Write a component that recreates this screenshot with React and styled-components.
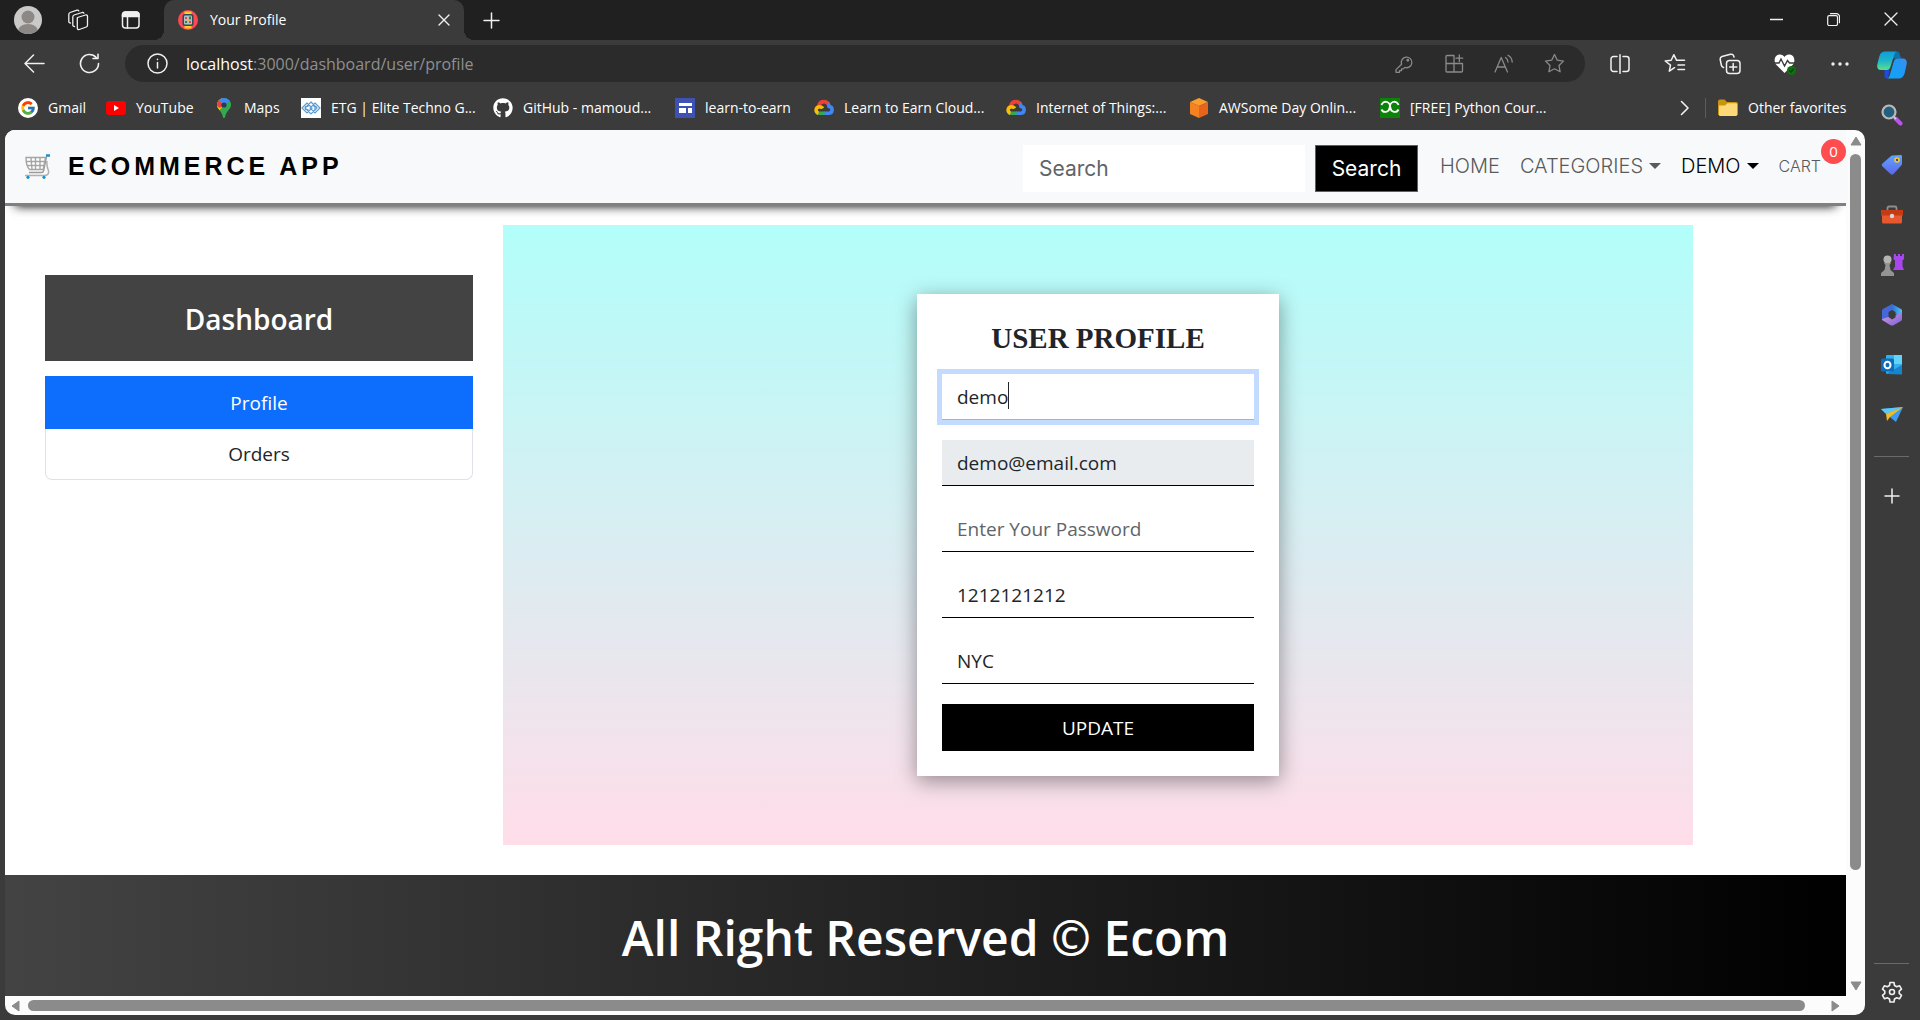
import React, { useEffect, useRef } from "react";
import styled, { createGlobalStyle, css } from "styled-components";
import { FcGoogle } from "react-icons/fc";
import { FaGithub } from "react-icons/fa";

const ui = `"Open Sans", "Noto Sans", sans-serif`;
const poppins = `Inter, "Open Sans", sans-serif`;
const chrome = "#3b3b3b";

const GlobalStyle = createGlobalStyle`
  *, *::before, *::after { box-sizing: border-box; }
  body { margin: 0; background: ${chrome}; font-family: ${ui}; overflow: hidden; }
  h1, h2, ul { margin: 0; padding: 0; }
  ul { list-style: none; }
  button, input { font: inherit; }
  svg { display: block; flex: none; }
`;

/* ---------- browser frame ---------- */

const Window = styled.div`
  display: flex;
  flex-direction: column;
  min-height: 100vh;
  background: ${chrome};
  color: #fff;
`;

const TitleBar = styled.header`
  display: flex;
  align-items: stretch;
  height: 40px;
  background: #202020;
`;

const IconButton = styled.button`
  display: flex;
  align-items: center;
  justify-content: center;
  flex: none;
  width: ${(p) => p.$w || 55}px;
  height: ${(p) => p.$h || 38}px;
  padding: 0;
  border: 0;
  background: none;
  color: ${(p) => (p.$dim ? "#8a8a8a" : "#f0f0f0")};
`;

const Tab = styled.div`
  position: relative;
  display: flex;
  align-items: center;
  width: 300px;
  margin-left: 3px;
  padding: 0 6px 0 14px;
  border-radius: 10px 10px 0 0;
  background: ${chrome};
  &::before,
  &::after {
    content: "";
    position: absolute;
    bottom: 0;
    width: 10px;
    height: 10px;
  }
  &::before {
    left: -10px;
    background: radial-gradient(circle at 0 0, transparent 10px, ${chrome} 10px);
  }
  &::after {
    right: -10px;
    background: radial-gradient(circle at 100% 0, transparent 10px, ${chrome} 10px);
  }
`;

const TabTitle = styled.span`
  flex: 1;
  margin-left: 12px;
  padding-bottom: 2px;
  font-size: 14px;
`;

const WindowControls = styled.div`
  display: flex;
  margin-left: auto;
`;

const Body = styled.div`
  display: flex;
  flex: 1;
`;

const Main = styled.div`
  display: flex;
  flex-direction: column;
  flex: 1;
  min-width: 0;
`;

const Toolbar = styled.div`
  display: flex;
  align-items: center;
  height: 47px;
  margin-right: -2px;
  padding-left: 7px;
`;

const AddressBar = styled.div`
  display: flex;
  align-items: center;
  flex: 1;
  height: 37px;
  margin: 0 7px 0 8px;
  padding: 0 6px 0 7px;
  border-radius: 19px;
  background: #2b2b2b;
`;

const Url = styled.div`
  flex: 1;
  margin-left: 4px;
  font-size: 16px;
  color: #8f8f8f;
  b {
    font-weight: 400;
    color: #fff;
  }
`;

const Bookmarks = styled.nav`
  display: flex;
  align-items: center;
  gap: 21px;
  height: 43px;
  padding: 0 18px 2px;
`;

const Bookmark = styled.a`
  display: flex;
  align-items: center;
  gap: 10px;
  flex: none;
  width: ${(p) => p.$w}px;
  color: #fff;
  font-size: 14px;
  line-height: 20px;
  white-space: nowrap;
  text-decoration: none;
`;

const BookmarkEnd = styled.div`
  display: flex;
  align-items: center;
  gap: 12px;
  margin-left: auto;
`;

const Separator = styled.span`
  width: 1px;
  height: 20px;
  background: #5c5c5c;
`;

const Sidebar = styled.aside`
  display: flex;
  flex-direction: column;
  align-items: center;
  width: 55px;
  padding: 0 2px 3px 0;
`;

const Rule = styled.hr`
  width: 35px;
  margin: ${(p) => (p.$bottom ? "auto 0 3px" : "16px 0 14px")};
  border: 0;
  border-top: 1px solid #6a6a6a;
`;

/* ---------- page viewport ---------- */

const Viewport = styled.div`
  display: grid;
  grid-template: 1fr 19px / minmax(0, 1fr) 19px;
  flex: 1;
  margin: 0 0 5px 5px;
  border-radius: 10px;
  overflow: hidden;
  background: #fcfcfc;
  color: #212529;
`;

const Page = styled.div`
  display: flex;
  flex-direction: column;
  background: #fff;
`;

const VScroll = styled.div`
  display: flex;
  flex-direction: column;
  align-items: center;
  gap: 8px;
  padding: 6px 4px 5px;
`;

const HScroll = styled.div`
  display: flex;
  align-items: center;
  gap: 8px;
  padding: 4px 6px;
`;

const Thumb = styled.div`
  flex: ${(p) => p.$size};
  align-self: stretch;
  border-radius: 6px;
  background: #8b8b8b;
`;

const Track = styled.div`
  flex: ${(p) => p.$size};
`;

/* ---------- shop page ---------- */

const NavBar = styled.header`
  position: relative;
  display: flex;
  align-items: flex-start;
  padding: 15px 0 11px 20px;
  border-bottom: 3px solid #808080;
  background: #f8f9fa;
  box-shadow: 0 10px 10px -10px #000;
`;

const Brand = styled.a`
  display: flex;
  align-items: center;
  gap: 18px;
  height: 42px;
  margin-right: auto;
  color: #000;
  font: 700 25px/42px "Liberation Sans", Arial, sans-serif;
  letter-spacing: 4px;
  text-decoration: none;
`;

const SearchForm = styled.form`
  display: flex;
  gap: 10px;
  margin-right: 22px;
  font-family: ${poppins};
  font-size: 21px;
`;

const SearchInput = styled.input`
  width: 282px;
  height: 47px;
  padding: 0 16px;
  border: 0;
  background: #fff;
  color: #212529;
  &::placeholder {
    color: #5f6469;
    opacity: 1;
  }
`;

const SearchButton = styled.button`
  width: 103px;
  height: 47px;
  padding: 0;
  border: 1px solid #198754;
  background: #000;
  color: #fff;
`;

const NavLinks = styled.ul`
  display: flex;
  gap: 20px;
  padding-right: 25px;
  font-family: ${poppins};
`;

const NavLink = styled.a`
  position: relative;
  display: flex;
  align-items: center;
  gap: 6px;
  height: 42px;
  color: ${(p) => (p.$active ? "#000" : "#595a5b")};
  font-size: ${(p) => (p.$small ? 16 : 20)}px;
  font-weight: 300;
  text-decoration: none;
`;

const Caret = styled.span`
  border: 6px solid transparent;
  border-top-color: currentColor;
  border-bottom: 0;
`;

const Badge = styled.span`
  position: absolute;
  top: -6px;
  right: -25px;
  width: 25px;
  height: 25px;
  border-radius: 50%;
  background: #ff4d4f;
  color: #fff;
  font: 400 15px/25px ${ui};
  text-align: center;
`;

const Content = styled.main`
  display: grid;
  grid-template-columns: minmax(0, 428fr) minmax(0, 1190fr);
  gap: 30px;
  flex: 1;
  padding: 19px 153px 30px 40px;
`;

const Menu = styled.nav`
  padding-top: 50px;
  text-align: center;
`;

const MenuTitle = styled.h1`
  margin-bottom: 15px;
  padding: 24px 0 22px;
  background: #434343;
  color: #fff;
  font-size: 28px;
  font-weight: 600;
  line-height: 40px;
`;

const MenuItem = styled.a`
  display: block;
  padding: 10px 0;
  border: 1px solid #dee2e6;
  border-top: 0;
  border-radius: 0 0 7px 7px;
  color: #212529;
  font-size: 19px;
  line-height: 30px;
  text-decoration: none;
  ${(p) =>
    p.$active &&
    css`
      padding: 12px 0 10px;
      border-color: #0d6efd;
      border-radius: 0;
      background: #0d6efd;
      color: #fff;
    `}
`;

const Panel = styled.section`
  display: flex;
  align-items: center;
  justify-content: center;
  min-height: 620px;
  background: linear-gradient(#b2fefa, #ffdde9);
`;

const Card = styled.form`
  display: flex;
  flex-direction: column;
  gap: 20px;
  width: 362px;
  padding: 25px;
  background: #fff;
  box-shadow: 0 5px 20px rgba(0, 0, 0, 0.4);
`;

const CardTitle = styled.h2`
  margin-bottom: -3px;
  font: 700 29px/38px "Liberation Serif", serif;
  text-align: center;
`;

const Field = styled.input`
  display: block;
  width: 100%;
  height: 46px;
  padding: 0 15px;
  border: 0;
  border-bottom: 1px solid #000;
  border-radius: 0;
  outline: 0;
  background: #fff;
  color: #212529;
  font-size: 19px;
  &::placeholder {
    color: #5f6469;
    opacity: 1;
  }
  &:disabled {
    background: #e9ecef;
  }
  &:focus {
    border-color: #86b7fe;
    box-shadow: 0 0 0 5px #c2dbfe;
    caret-color: transparent;
  }
`;

const FieldWrap = styled.div`
  position: relative;
`;

const TextCaret = styled.span`
  position: absolute;
  top: 8px;
  left: 66px;
  width: 1px;
  height: 27px;
  background: #212529;
`;

const UpdateButton = styled.button`
  height: 47px;
  padding: 0;
  border: 0;
  background: #000;
  color: #fff;
  font-size: 19px;
`;

const Footer = styled.footer`
  padding: 28px 0 23px;
  background: linear-gradient(to right, #434343, #000);
  color: #fff;
  font-size: 48px;
  font-weight: 600;
  line-height: 70px;
  text-align: center;
`;

/* ---------- icons ---------- */

const Line = ({ w = 20, h = w, sw = 1.5, children, ...rest }) => (
  <svg width={w} height={h} viewBox={`0 0 ${w} ${h}`} fill="none" stroke="currentColor" strokeWidth={sw} strokeLinecap="round" strokeLinejoin="round" aria-hidden="true" {...rest}>
    {children}
  </svg>
);

const Art = ({ w = 20, h = w, children }) => (
  <svg width={w} height={h} viewBox={`0 0 ${w} ${h}`} aria-hidden="true">
    {children}
  </svg>
);

const Avatar = () => (
  <Art w={28}>
    <clipPath id="avatarClip"><circle cx="14" cy="14" r="14" /></clipPath>
    <g clipPath="url(#avatarClip)">
      <rect width="28" height="28" fill="#cbc9c7" />
      <circle cx="14" cy="11" r="6.5" fill="#8c8886" />
      <ellipse cx="14" cy="25" rx="10" ry="7" fill="#8c8886" />
    </g>
  </Art>
);

const Workspaces = () => (
  <Line w={22} sw={1.3}>
    <path d="M10.5 8.5l8-2.5c1-.3 2 .2 2 1.3v9c0 .8-.4 1.400-1.200 1.700l-7 2.500c-1 .3-2-.2-2-1.300v-9c0-.8-.1-1.300.2-1.700z" />
    <path d="M7.500 17.500c-1 0-1.700-.6-1.700-1.600V8c0-1 .4-1.700 1.300-2l8-2.500c.8-.2 1.500 0 1.800.7" />
    <path d="M3.500 14c-1 0-1.700-.6-1.700-1.600V5.500c0-1 .4-1.700 1.300-2L10 1.200c.8-.2 1.500 0 1.800.7" />
  </Line>
);

const TabActions = () => (
  <Line w={20} sw={1.5}>
    <rect x="1.500" y="2" width="16.500" height="16" rx="3" />
    <path d="M1.500 6.500V5a3 3 0 013-3H15a3 3 0 013 3v1.500z" fill="currentColor" />
    <path d="M6.500 7v11" />
  </Line>
);

const Favicon = () => (
  <Art w={20}>
    <circle cx="10" cy="10" r="10" fill="#ff4850" />
    <rect x="6.500" y="1.500" width="7" height="17" fill="#ffcd1f" />
    <rect x="4.500" y="4" width="11" height="12" rx="2.500" fill="#2d4a5c" />
    <rect x="6" y="5.500" width="8" height="9" rx="1" fill="#a9c4c8" />
    <path d="M7 7h2v2H7zM11 11h2v2h-2z" fill="#e4474b" />
    <path d="M11 6.500h2v3h-2zM7 11h2v2H7z" fill="#3e7d4b" />
    <path d="M9 9h2.500v2H9z" fill="#f6b927" />
  </Art>
);

const Cross = ({ s = 13, sw = 1.4 }) => (
  <Line w={s} sw={sw}><path d={`M1 1L${s - 1} ${s - 1}M${s - 1} 1L1 ${s - 1}`} /></Line>
);
const Plus = ({ s = 17, sw = 1.5 }) => (
  <Line w={s} sw={sw}><path d={`M${s / 2} 1V${s - 1}M1 ${s / 2}H${s - 1}`} /></Line>
);
const Minimize = () => <Line w={13} sw={1.3}><path d="M0 6.500h13" /></Line>;
const Restore = () => (
  <Line w={13} sw={1.2}>
    <rect x=".7" y="2.700" width="9.800" height="9.800" rx="1.500" />
    <path d="M3.500.7h6a3 3 0 013 3v6" />
  </Line>
);
const Back = () => <Line w={21} sw={1.5}><path d="M20 10.500H1.500M9.500 2L1 10.500 9.500 19" /></Line>;
const Reload = () => <Line w={21} sw={1.6}><path d="M19.500 10.500a9 9 0 11-2.300-6M19 1.200v4.300h-5" /></Line>;
const Info = () => (
  <Line w={21} sw={1.5}>
    <circle cx="10.500" cy="10.500" r="9.500" />
    <path d="M10.500 9.500v5.500M10.500 6.200v.3" />
  </Line>
);
const Key = () => (
  <Line w={18} sw={1.3}>
    <path d="M6.600 9.200a5.300 5.300 0 113.200 3.200L8.300 13.900H6.500v1.800H4.500v1.600H1v-2.700z" />
    <circle cx="12.800" cy="5.200" r=".8" fill="currentColor" />
  </Line>
);
const AddApp = () => (
  <Line w={19} sw={1.3}>
    <path d="M9 1.500H2a1 1 0 00-1 1V17a1 1 0 001 1h14.500a1 1 0 001-1v-7.500H1M9 1.500V18M14.300 1v6.500M11 4.200h6.700" />
  </Line>
);
const ReadAloud = () => (
  <Line w={20} sw={1.3}>
    <path d="M1 18L7.200 3.500 13.500 18M3.300 13h8M11.500 3.500c1.600 1 2.400 2.600 2.500 4.500M14 1.200c2.600 1.500 4 3.900 4.200 6.800" />
  </Line>
);
const starPath = "M10.500 1.500l2.800 5.700 6.200.9-4.500 4.400 1.100 6.300-5.600-3-5.600 3L6 12.500 1.500 8.100l6.200-.9z";
const Star = () => <Line w={21} sw={1.3}><path d={starPath} /></Line>;
const Split = () => (
  <Line w={20} sw={1.5}>
    <path d="M7 2.500H3.500A2.500 2.500 0 001 5v10a2.500 2.500 0 002.500 2.500H7M13 2.500h3.500A2.500 2.500 0 0119 5v10a2.500 2.500 0 01-2.500 2.500H13M10 .8v18.500" />
  </Line>
);
const Favorites = () => (
  <Line w={22} sw={1.5}>
    <path d="M10.500 14.700l-5.200 3.500 1.200-6L1.200 8l6-.8 2.600-5.500 2.700 5.500h8M14 12h6.500M14 16.500h6.500" />
  </Line>
);
const Collections = () => (
  <Line w={22} sw={1.5}>
    <rect x="7.500" y="7.500" width="13.500" height="13" rx="3" />
    <path d="M14.200 10.500v7M10.700 14h7M4.500 14.500C3 14.200 2.600 13.500 2.300 12L1.200 6.500C1 5 1.500 4 3 3.500l8.500-2.200c1.800-.4 2.700.2 3.200 1.700l.3 1" />
  </Line>
);
const Heart = () => (
  <svg width="22" height="22" viewBox="0 0 22 22" aria-hidden="true">
    <path d="M10.500 20L2 11.500C-.5 8 .3 2.500 5 1.600c2.500-.4 4.500.8 5.500 2.400 1-1.600 3-2.800 5.500-2.400C20.700 2.500 21.500 8 19 11.500z" fill="#fff" />
    <path d="M0 10h5l2-4 3.500 7 3-5.500 2 2.500H21" fill="none" stroke="#3b3b3b" strokeWidth="1.400" />
    <circle cx="17.500" cy="17.500" r="4.500" fill="#0e700e" />
    <path d="M15.500 17.500l1.500 1.500 2.500-3" fill="none" stroke="#0a3d0a" strokeWidth="1.200" />
  </svg>
);
const Dots = () => <Art w={18}><g fill="#f0f0f0"><circle cx="2" cy="9" r="1.700" /><circle cx="9" cy="9" r="1.700" /><circle cx="16" cy="9" r="1.700" /></g></Art>;
const Chevron = () => <Line w={10} h={16} sw={1.6}><path d="M1.500 1.500L8 8l-6.500 6.500" /></Line>;

const Copilot = () => (
  <Art w={30} h={28}>
    <defs>
      <linearGradient id="cpA" x1="0" y1="0" x2="0" y2="1"><stop offset="0" stopColor="#0f9fdc" /><stop offset=".5" stopColor="#1fb4c8" /><stop offset="1" stopColor="#5be08e" /></linearGradient>
      <linearGradient id="cpB" x1="0" y1="1" x2="1" y2="0"><stop offset="0" stopColor="#12a5f5" /><stop offset=".5" stopColor="#1b9bf5" /><stop offset="1" stopColor="#3b8ef0" /></linearGradient>
    </defs>
    <path d="M15 5L19.500.5c2.500 0 3 1.500 3.500 3.500.4 2 1 3.500 3.500 3.500H14z" fill="#0b74ad" />
    <path d="M7.500 19h5l-1.500 8c-1.500 1-3 .5-3.500-1.500z" fill="#1c4be0" />
    <path d="M8.500.5h12c-2 0-3 2-3.800 5l-3 9.500c-.8 2.500-1.500 4-4.200 4H4C1 19-.3 16.700.3 13.500l2-8C3.200 2 5 .5 8.500.5z" fill="url(#cpA)" />
    <path d="M21.500 27.500h-12c2 0 3-2 3.800-5l3-10.500c.8-2.500 1.500-4.500 4.200-4.500H26c3 0 4.300 2.500 3.700 5.500l-2 9c-.9 3.500-2.700 5.500-6.200 5.500z" fill="url(#cpB)" />
  </Art>
);

const GoogleIcon = () => (
  <svg width="20" height="20" viewBox="0 0 20 20" aria-hidden="true">
    <circle cx="10" cy="10" r="10" fill="#fff" />
    <FcGoogle x="2" y="2" size={16} />
  </svg>
);
const YouTube = () => (
  <Art><rect y="3" width="20" height="14" rx="3" fill="#f00" /><path d="M8 7l5 3-5 3z" fill="#fff" /></Art>
);
const MapsPin = () => (
  <Art>
    <clipPath id="pinClip"><path d="M10 0a7 7 0 017 7c0 4-5 6-6 12.500-.3.700-1.700.7-2 0C8 13 3 11 3 7a7 7 0 017-7z" /></clipPath>
    <g clipPath="url(#pinClip)">
      <rect width="20" height="20" fill="#34a853" />
      <path d="M0 0h8l3 6-6 7H0z" fill="#fbbc04" />
      <path d="M2 3l3-1.500L10 7 6 10 2 7z" fill="#ea4335" />
      <path d="M5 2L8-1h7l2 3.500-6 5.500z" fill="#4285f4" />
      <path d="M16 2l2 4-8 9-1-5z" fill="#34a853" />
    </g>
    <circle cx="10" cy="7" r="2.600" fill="#2d3a52" />
  </Art>
);
const Etg = () => (
  <Art>
    <rect width="20" height="20" fill="#fff" />
    <g fill="none" stroke="#5b9bd0" strokeWidth="1.200">
      <path d="M6 5l-5 5 5 5 5-5zM14 5l5 5-5 5-5-5zM10 4l6 6-6 6-6-6z" />
      <path d="M7.500 8.500h-3v3h3M12.500 8.500h3M14 8.500v4" />
    </g>
  </Art>
);
const Sites = () => (
  <Art>
    <rect width="20" height="20" fill="#3f51b5" />
    <path d="M4 5h13v3H4zM4 10h7v5H4zM13 10h4v5h-4z" fill="#fff" />
  </Art>
);
const Cloud = () => (
  <Art>
    <g fill="none" strokeWidth="3.600">
      <path d="M4.800 7.500C5.500 4.800 7.500 3.600 10 3.600c2 0 3.600 1 4.500 2.600" stroke="#ea4335" />
      <path d="M13.800 5.500c.8.900 1.200 1.700 1.300 3 2 .3 3 1.700 3 3.300 0 2.200-1.500 3.400-3.500 3.400H10" stroke="#4285f4" />
      <path d="M10.500 15.200H5.500c-.8 0-1.500-.2-2-.600" stroke="#34a853" />
      <path d="M4.500 15.200c-1.500-.5-2.400-1.700-2.400-3.200 0-2 1.500-3.300 3.400-3.300 1.300 0 2.500.7 3 1.800" stroke="#fbbc05" />
    </g>
  </Art>
);
const Cube = () => (
  <Art w={20} h={20}>
    <path d="M10 0l9 4-9 4-9-4z" fill="#fa9d2e" />
    <path d="M1 4l9 4v12l-9-4z" fill="#f58220" />
    <path d="M19 4l-9 4v12l9-4z" fill="#e8631b" />
  </Art>
);
const Gfg = () => (
  <Art>
    <rect width="20" height="20" fill="#0b8308" />
    <path d="M1.500 7A4.300 4.300 0 119.500 10a4.200 4.200 0 01-8 1.500M18.500 7a4.300 4.300 0 10-8 3 4.200 4.200 0 008 1.500" fill="none" stroke="#fff" strokeWidth="1.800" />
  </Art>
);
const Folder = () => (
  <Art>
    <path d="M0 3.500A2 2 0 012 1.500h4.500l2.500 2.500h9a2 2 0 012 2V17H0z" fill="#c9940f" />
    <path d="M1 7.500h6l2.500-2.200H18a1 1 0 011 1V17a1 1 0 01-1 1H2a1 1 0 01-1-1z" fill="#ffd978" />
  </Art>
);

const CartIcon = () => (
  <Art w={25} h={25}>
    <path d="M21.500 2.500l-3 14.500c-.3 1-.8 1.500-2 1.500H4" fill="none" stroke="#9b9b9b" strokeWidth="1.500" />
    <path d="M1 3.500h19.500l-2.300 12H4.500C2 13 1 8 1 3.500zM1.300 7.500H19M2.300 11.500H18.500M6 3.500l1 12M10.500 3.500v12M15 3.500v12" fill="#fff" stroke="#a5a5a5" strokeWidth="1.400" />
    <path d="M22 7c-1 9 3.500 9.500 1 13-1 1.500-2.500 1.500-4 1.500H0" fill="none" stroke="#b0b0b0" strokeWidth="1.500" />
    <path d="M21 1.500h4" stroke="#1d8fd0" strokeWidth="2.500" />
    <circle cx="3" cy="23.300" r="1.600" fill="#1d8fd0" />
    <circle cx="19" cy="23.300" r="1.600" fill="#1d8fd0" />
  </Art>
);

const SearchGlass = () => (
  <Art w={22}>
    <path d="M14.500 14.500l5 5" stroke="#c14ff5" strokeWidth="4" strokeLinecap="round" />
    <path d="M12.500 12.500l2.500 2.500" stroke="#ccc" strokeWidth="2" />
    <circle cx="8" cy="8" r="6.500" fill="#245f80" stroke="#b9b9b9" strokeWidth="2.200" />
  </Art>
);
const Tag = () => (
  <Art w={22}>
    <defs><linearGradient id="tagG" x1="0" y1="0" x2="0" y2="1"><stop offset="0" stopColor="#62a4fa" /><stop offset="1" stopColor="#5b66ef" /></linearGradient></defs>
    <path d="M11.500 1.500l8-.5c1 0 1.500.5 1.500 1.500v7c0 1-.3 1.600-1 2.300l-7.500 8.200c-1 1-2 1-3 0l-8-7.500c-1-1-1-2 0-3L9.500 2.500c.6-.6 1.200-.9 2-1z" fill="url(#tagG)" />
    <circle cx="16" cy="6" r="2" fill="#394a9a" stroke="#f5cb28" strokeWidth="1.600" />
  </Art>
);
const Toolbox = () => (
  <Art w={24} h={20}>
    <path d="M7.500 5V3a1.500 1.500 0 011.500-1.500h6A1.500 1.500 0 0116.500 3v2" fill="none" stroke="#8b8e92" strokeWidth="1.800" />
    <rect x="2" y="6" width="20" height="12.500" rx="1.500" fill="#e8582f" />
    <path d="M1 5h22v5.500H1z" fill="#c53c14" />
    <circle cx="12" cy="11" r="2.200" fill="#d7d7d7" />
  </Art>
);
const Chess = () => (
  <Art w={24}>
    <path d="M14 1h2v2h2V1h2v2h2V1h2v5l-1.500 1.500v6l1.500 3.500H13l2-3.500v-6L13.500 6z" fill="#a947ef" />
    <circle cx="7.500" cy="6.500" r="4" fill="#b5b5b5" />
    <path d="M4 10h7l-1.500 2 1 5 3.500 3v3H1v-3l3.500-3 1-5z" fill="#949494" />
  </Art>
);
const M365 = () => (
  <Art w={22}>
    <defs>
      <linearGradient id="mA" x1="0" y1="0" x2="1" y2="0"><stop offset="0" stopColor="#2f6fd0" /><stop offset="1" stopColor="#4bc3f5" /></linearGradient>
      <linearGradient id="mB" x1="0" y1="0" x2="1" y2="1"><stop offset="0" stopColor="#d59ae6" /><stop offset="1" stopColor="#7d62d2" /></linearGradient>
    </defs>
    <path d="M11 0l9 5c1 .6 1 1 1 2v7l-6.500-4V8L11 6z" fill="url(#mA)" />
    <path d="M11 0v6L7.500 8v6l-3 2.500L1 15V7c0-1 .3-1.500 1-2z" fill="#4468d8" />
    <path d="M21 8v7c0 1-.3 1.500-1 2l-8 4.500h-2L1 16v-1l6.500-2 3.500 2.500 3.500-2v-2z" fill="url(#mB)" />
  </Art>
);
const Outlook = () => (
  <Art w={22}>
    <rect x="5" y="1" width="16" height="19" rx="1" fill="#32b0ea" />
    <path d="M13 1h8v9h-8z" fill="#62d3f9" />
    <path d="M5 20l16-9v9.500z" fill="#1784d0" />
    <rect x="0" y="4.500" width="13" height="13" rx="1.500" fill="#0f6cbd" />
    <ellipse cx="6.500" cy="11" rx="3" ry="3.300" fill="none" stroke="#fff" strokeWidth="2" />
  </Art>
);
const Send = () => (
  <Art w={22}>
    <path d="M0 5l22-2-7 15-5-4z" fill="#3b9cf0" />
    <path d="M0 5l22-2L5 10z" fill="#5bc8f7" />
    <path d="M22 3L5 10l1 7 3-4z" fill="#f5b921" />
  </Art>
);
const Gear = () => (
  <Line w={22} sw={1.6}>
    <path d="M9 1.500h4l.5 3 2.200 1.200 2.800-1 2 3.400-2.300 2v2.300l2.300 2-2 3.400-2.800-1-2.200 1.200-.5 3H9l-.5-3-2.200-1.200-2.800 1-2-3.400 2.300-2v-2.300l-2.300-2 2-3.400 2.800 1 2.200-1.200z" />
    <circle cx="11" cy="11" r="2.500" />
  </Line>
);
const arrows = { up: "M6 1l5 8H1z", down: "M1 1h10L6 9z", left: "M1 6l7-5v10z", right: "M1 1l7 5-7 5z" };
const Arrow = ({ dir }) => {
  const vertical = dir === "up" || dir === "down";
  const w = vertical ? 12 : 9;
  const h = vertical ? 10 : 12;
  return (
    <svg width={w} height={h} viewBox={`0 0 ${w} ${h}`} aria-hidden="true">
      <path d={arrows[dir]} fill="#8b8b8b" stroke="#8b8b8b" strokeLinejoin="round" />
    </svg>
  );
};

/* ---------- data ---------- */

const bookmarks = [
  ["Gmail", GoogleIcon, 67],
  ["YouTube", YouTube, 87],
  ["Maps", MapsPin, 66],
  ["ETG | Elite Techno G...", Etg, 171],
  ["GitHub - mamoud...", () => <FaGithub size={20} />, 161],
  ["learn-to-earn", Sites, 118],
  ["Learn to Earn Cloud...", Cloud, 171],
  ["Internet of Things:...", Cloud, 162],
  ["AWSome Day Onlin...", Cube, 170],
  ["[FREE] Python Cour...", Gfg, 168],
];

const sideApps = [
  ["Search", SearchGlass],
  ["Shopping", Tag],
  ["Tools", Toolbox],
  ["Games", Chess],
  ["Microsoft 365", M365],
  ["Outlook", Outlook],
  ["Drop", Send],
];

export default function App() {
  const nameRef = useRef(null);
  useEffect(() => {
    const field = nameRef.current;
    field.focus();
    field.setSelectionRange(field.value.length, field.value.length);
  }, []);

  return (
    <>
      <GlobalStyle />
      <Window>
        <TitleBar>
          <IconButton $h={40} aria-label="Account"><Avatar /></IconButton>
          <IconButton $w={46} $h={40} aria-label="Workspaces"><Workspaces /></IconButton>
          <IconButton $w={60} $h={40} aria-label="Tab actions"><TabActions /></IconButton>
          <Tab>
            <Favicon />
            <TabTitle>Your Profile</TabTitle>
            <IconButton $w={28} $h={40} aria-label="Close tab"><Cross s={12} /></IconButton>
          </Tab>
          <IconButton $h={40} aria-label="New tab"><Plus /></IconButton>
          <WindowControls>
            <IconButton $w={58} $h={38} aria-label="Minimize"><Minimize /></IconButton>
            <IconButton $w={57} $h={38} aria-label="Restore"><Restore /></IconButton>
            <IconButton $w={58} $h={38} aria-label="Close"><Cross s={14} sw={1.3} /></IconButton>
          </WindowControls>
        </TitleBar>

        <Body>
          <Main>
            <Toolbar>
              <IconButton aria-label="Back"><Back /></IconButton>
              <IconButton aria-label="Refresh"><Reload /></IconButton>
              <AddressBar>
                <IconButton $w={50} aria-label="Site information"><Info /></IconButton>
                <Url><b>localhost</b>:3000/dashboard/user/profile</Url>
                <IconButton $w={50} $dim aria-label="Passwords"><Key /></IconButton>
                <IconButton $w={50} $dim aria-label="Install app"><AddApp /></IconButton>
                <IconButton $w={50} $dim aria-label="Read aloud"><ReadAloud /></IconButton>
                <IconButton $w={50} $dim aria-label="Add to favorites"><Star /></IconButton>
              </AddressBar>
              <IconButton aria-label="Split screen"><Split /></IconButton>
              <IconButton aria-label="Favorites"><Favorites /></IconButton>
              <IconButton aria-label="Collections"><Collections /></IconButton>
              <IconButton aria-label="Browser essentials"><Heart /></IconButton>
              <IconButton aria-label="More"><Dots /></IconButton>
            </Toolbar>

            <Bookmarks>
              {bookmarks.map(([label, Icon, w]) => (
                <Bookmark key={label} href="#" $w={w}><Icon />{label}</Bookmark>
              ))}
              <BookmarkEnd>
                <IconButton $w={16} aria-label="More bookmarks"><Chevron /></IconButton>
                <Separator />
                <Bookmark href="#" $w={129}><Folder />Other favorites</Bookmark>
              </BookmarkEnd>
            </Bookmarks>

            <Viewport>
              <Page>
                <NavBar>
                  <Brand href="#"><CartIcon />ECOMMERCE APP</Brand>
                  <SearchForm onSubmit={(e) => e.preventDefault()}>
                    <SearchInput type="search" placeholder="Search" aria-label="Search" />
                    <SearchButton type="submit">Search</SearchButton>
                  </SearchForm>
                  <NavLinks>
                    <li><NavLink href="#">HOME</NavLink></li>
                    <li><NavLink href="#">CATEGORIES<Caret /></NavLink></li>
                    <li><NavLink href="#" $active>DEMO<Caret /></NavLink></li>
                    <li><NavLink href="#" $small>CART<Badge>0</Badge></NavLink></li>
                  </NavLinks>
                </NavBar>

                <Content>
                  <Menu>
                    <MenuTitle>Dashboard</MenuTitle>
                    <MenuItem href="#" $active>Profile</MenuItem>
                    <MenuItem href="#">Orders</MenuItem>
                  </Menu>
                  <Panel>
                    <Card onSubmit={(e) => e.preventDefault()}>
                      <CardTitle>USER PROFILE</CardTitle>
                      <FieldWrap>
                        <Field ref={nameRef} type="text" defaultValue="demo" aria-label="Name" />
                        <TextCaret />
                      </FieldWrap>
                      <Field type="email" defaultValue="demo@email.com" aria-label="Email" disabled />
                      <Field type="password" placeholder="Enter Your Password" aria-label="Password" />
                      <Field type="text" defaultValue="1212121212" aria-label="Phone" />
                      <Field type="text" defaultValue="NYC" aria-label="Address" />
                      <UpdateButton type="submit">UPDATE</UpdateButton>
                    </Card>
                  </Panel>
                </Content>

                <Footer>All Right Reserved © Ecom</Footer>
              </Page>

              <VScroll>
                <Arrow dir="up" />
                <Thumb $size={724} />
                <Track $size={96} />
                <Arrow dir="down" />
              </VScroll>
              <HScroll>
                <Arrow dir="left" />
                <Thumb $size={1776} />
                <Track $size={10} />
                <Arrow dir="right" />
              </HScroll>
            </Viewport>
          </Main>

          <Sidebar>
            <IconButton $h={50} aria-label="Copilot"><Copilot /></IconButton>
            {sideApps.map(([label, Icon]) => (
              <IconButton key={label} $h={50} aria-label={label}><Icon /></IconButton>
            ))}
            <Rule />
            <IconButton $h={50} aria-label="Customize sidebar"><Plus s={16} /></IconButton>
            <Rule $bottom />
            <IconButton $h={50} aria-label="Settings"><Gear /></IconButton>
          </Sidebar>
        </Body>
      </Window>
    </>
  );
}
